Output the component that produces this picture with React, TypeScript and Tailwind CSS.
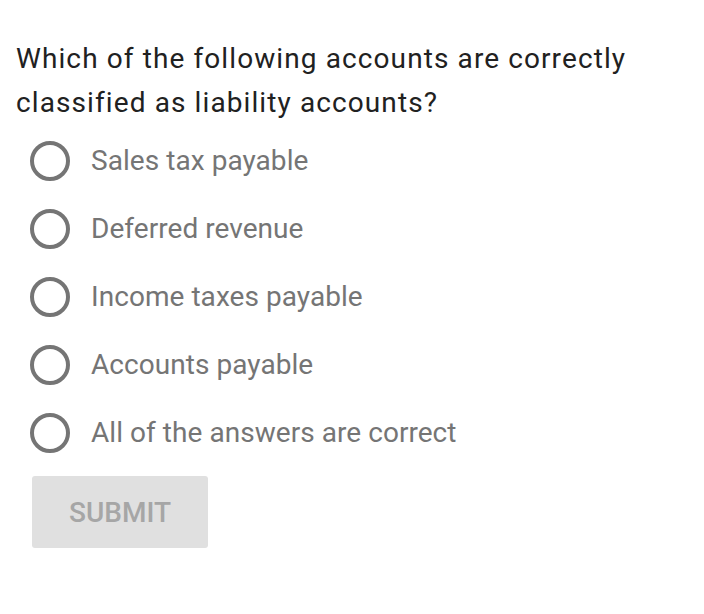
const options = [
  "Sales tax payable",
  "Deferred revenue",
  "Income taxes payable",
  "Accounts payable",
  "All of the answers are correct",
];

export default function App() {
  return (
    <div className="w-[704px] h-[614px] bg-white pt-[37px] font-['Roboto',sans-serif]">
      <h1 className="px-4 text-[28px] leading-[44px] tracking-[1.1px] text-[#212121] font-normal">
        Which of the following accounts are correctly classified as liability accounts?
      </h1>
      <div className="mt-[2px] flex flex-col">
        {options.map((o) => (
          <label key={o} className="h-[68px] flex items-center pl-[30px]">
            <span className="w-[40px] h-[40px] rounded-full border-4 border-[#757575] shrink-0" />
            <span className="ml-[21px] text-[28px] tracking-[0.05px] text-[#757575]">{o}</span>
          </label>
        ))}
      </div>
      <button className="ml-[32px] mt-[9px] w-[176px] h-[72px] pt-[2px] rounded-[3px] bg-[#e0e0e0] text-[28px] font-medium text-[#a6a6a6] uppercase">
        Submit
      </button>
    </div>
  );
}
